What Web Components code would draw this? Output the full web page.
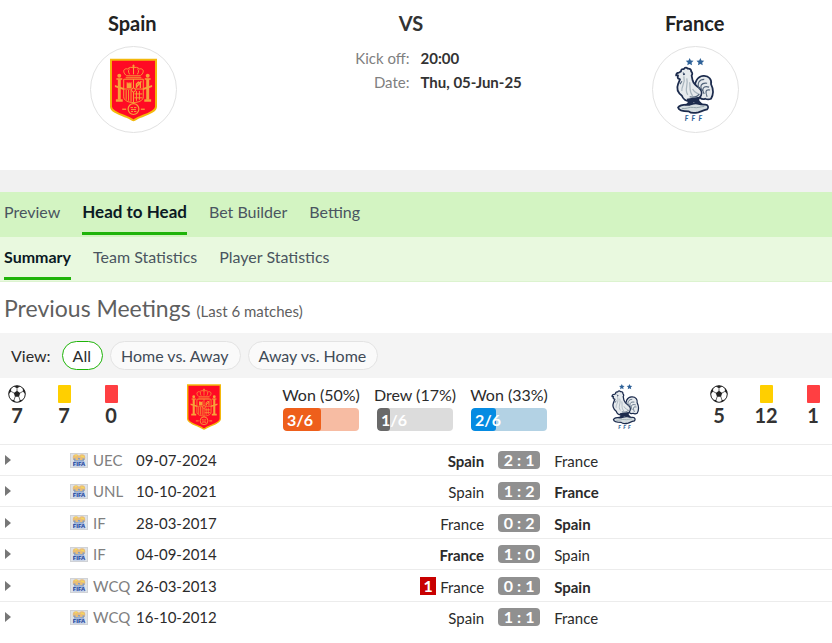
<!DOCTYPE html>
<html lang="en">
<head>
<meta charset="utf-8">
<title>Spain vs France – Head to Head</title>
<style>
body{margin:0;background:#fff;color:#2b2b2b;font-family:Lato,"Liberation Sans",sans-serif;font-size:16px}
</style>
</head>
<body>
<match-page></match-page>

<template id="spain-svg">
<svg viewBox="0 0 48 64" role="img" aria-label="Spain crest">
<path d="M1 1h46v48c0 5-10 8-16 10.500-4 1.500-6 3.500-7 3.500s-3-2-7-3.500C11 57 1 54 1 49z" fill="#ff0a24" stroke="#f3b90c" stroke-width="2"/>
<g fill="none" stroke="#f7a33a" stroke-width="1">
<path d="M17 17.500c-5-4-3-8 1-7 2-2 4-2 6-1 2-1 4-1 6 1 4-1 6 3 1 7z"/>
<path d="M20 16c-2-3-1-5 0-5.500M28 16c2-3 1-5 0-5.500M24 16V6M22.500 7.500h3M16 19.500h16"/>
<path d="M14 21h20v18c0 4-5 5.500-10 6-5-.500-10-2-10-6z"/>
<path d="M24 21v24M14 31h20M16.500 32v10M19 32v11M21.500 32v12M27 33v10M30 33v9M25 36h8M25 40h8"/>
<path d="M27 30v-4l2-2 2 1v5M32 23l-5 6" stroke-width="1.400"/>
<circle cx="24" cy="32" r="2" fill="#ff0a24"/>
</g>
<g fill="#f7a33a">
<path d="M17 24h1v1h1v-1h1v1h1v-1h1v6h-5z"/>
<rect x="8" y="21" width="3" height="21"/><rect x="37" y="21" width="3" height="21"/>
<circle cx="9.500" cy="17.500" r="2"/><circle cx="38.500" cy="17.500" r="2"/>
<rect x="6.500" y="20" width="6" height="1.500"/><rect x="35.500" y="20" width="6" height="1.500"/>
<rect x="6" y="41.500" width="7" height="2.500"/><rect x="35" y="41.500" width="7" height="2.500"/>
<path d="M5 27l9 3v2l-9-3zM43 27l-9 3v2l9-3z"/>
<rect x="12.500" y="51" width="4" height="1.300"/><rect x="31.500" y="51" width="4" height="1.300"/>
</g>
<circle cx="24" cy="51.500" r="5.500" fill="none" stroke="#f7a33a" stroke-width="1.200"/>
<path d="M21 50h2.500M24.500 50H27M21.500 52h5M21.500 54h2M24.500 54h2.500" stroke="#f7a33a"/>
</svg>
</template>

<template id="france-svg">
<svg viewBox="0 0 48 66" role="img" aria-label="France crest">
<path fill="#2f6298" d="M18 0l1.200 2.600 2.800.3-2.100 1.900.6 2.800L18 6.200l-2.500 1.400.6-2.800L14 2.900l2.800-.3zM29 0l1.200 2.600 2.800.3-2.100 1.900.6 2.800L29 6.200l-2.500 1.400.6-2.800L25 2.900l2.800-.3z"/>
<g stroke="#1c2b4d" stroke-width="1.800" stroke-linejoin="round" fill="#e6eaed">
<path d="M24 34c-2-9 2-15 8-15.500 6-.5 9 4 8 8.500 2 4 3 10 0 15-2 1-4 1-6 0-4 2-7-2-10-8z"/>
<path d="M9 14c0-2 1-3 3-2.500 1-2 3-1.800 4-.5 2-.5 4 1 3.500 3 1.500 1 1.500 3 .5 4l1 5c1 4 4 6 7 8 3 3 3 7 0 10-3 3-6 3-9 3-5 1-8-2-9-5-4-3-6-7-4-12l2-5-2-1c-1-1 0-2 0-3H4c0-2 1-3 3-3z"/>
<path d="M6 51c2-3 6-3 9-3 4 1 6-2 11-1 3 1 5 1 8 1 3 0 4 3 2 5-4 1-6 2-9 3-4 1-8 1-10-1-4 0-10 0-11-4z" fill="#d5dde0"/>
</g>
<path d="M15 42l13-2v4l4 4-6-1-4-1-4 3-5 0 3-3z" fill="#1c2b4d"/>
<path d="M12 19c2 8-3 10-2 15M15 21c2 8-3 11 1 17M18 25c1 6-1 9 3 14M21 32c2 4 4 4 6 5" fill="none" stroke="#a8b5be" stroke-width="1.300"/>
<path d="M28 32c-3-6 0-10 5-10M31 34c-3-5-1-9 5-8M33 37c-3-5-1-9 5-7M36 40c-2-5-2-8 3-7M18 40c5 1 8 0 10-3M8 27l2-3M11 15l2 2" fill="none" stroke="#52647a" stroke-width="1.200"/>
<path d="M10 52c4 1 8-2 12-1s7-1 11-1" fill="none" stroke="#93a3aa"/>
<circle cx="12" cy="17" r=".8" fill="#1c2b4d"/>
<g fill="#2f6298" font-family="Lato,sans-serif" font-weight="900" font-style="italic" font-size="7"><text x="13" y="65">F</text><text x="20" y="65">F</text><text x="27" y="65">F</text></g>
</svg>
</template>

<template id="ball-svg">
<svg viewBox="0 0 18 18" role="img" aria-label="Goals"><circle cx="9" cy="9" r="8.300" fill="#fff" stroke="#222"/><path d="M9 5.700l3.200 2.300-1.200 3.800H7L5.800 8zM5.700 1.500L9 3.200l3.300-1.700L9 .700zM.800 9l2.300-2.600.1-3.700L1 6zM17.200 9l-2.300-2.600-.1-3.700L17 6zM3 14.800l3.100.200 1.600 2.200L5 16.400zM15 14.800l-3.100.200-1.600 2.200 2.700-.8z" fill="#222"/><path d="M9 3.200V6M3.100 6.400L6 8M14.900 6.400L12 8M6.100 15L7.200 11.500M11.900 15l-1.100-3.500" stroke="#222" stroke-width=".7"/></svg>
</template>

<template id="fifa-svg">
<svg viewBox="0 0 18 15" role="img" aria-label="FIFA"><rect x=".5" y=".5" width="17" height="14" fill="#dfe3e8" stroke="#d0d2d6"/><circle cx="6" cy="4.500" r="3.200" fill="#e9bd78"/><circle cx="12" cy="4.500" r="3.200" fill="#e9bd78"/><path d="M3.500 6l2 .5M8 5.500l2 .5M12.500 6.500l2-.5M4 8h10" stroke="#7f9cc9" fill="none" stroke-width="1.300"/><path d="M5 3l2-1M11 3l3 1" stroke="#f6df55" stroke-width="1.300"/><rect x="3" y="8.500" width="12" height="5" fill="#b3c5e6"/><text x="9" y="13.300" text-anchor="middle" font-family="Lato,sans-serif" font-size="6" font-weight="900" fill="#1d459b">FIFA</text></svg>
</template>

<script>
const define=(name,css,html)=>customElements.define(name,class extends HTMLElement{
  connectedCallback(){
    if(this.shadowRoot)return;
    const root=this.attachShadow({mode:'open'});
    root.innerHTML='<style>*{box-sizing:border-box}'+css+'</style>'+(typeof html==='function'?html(this):html);
  }
});
const picture=id=>document.getElementById(id+'-svg').innerHTML;

define('app-icon',':host{display:block;line-height:0}svg{display:block;width:100%;height:100%}',el=>picture(el.getAttribute('name')));

define('team-head',`:host{display:flex;flex-direction:column;align-items:center;gap:11px}
h2{margin:0;font-size:20px;line-height:24px;font-weight:700;color:#222}
.ring{width:87px;height:87px;margin-left:2px;border:1px solid #e2e2e2;border-radius:50%;display:grid;place-items:center}
app-icon{width:47px;height:64px}`,
el=>`<h2><slot></slot></h2><div class="ring"><app-icon name="${el.getAttribute('crest')}"></app-icon></div>`);

define('match-header',`:host{display:grid;grid-template-columns:32fr 36fr 32fr;padding:11px 5px 37px 0;min-height:170px}
.mid{display:flex;flex-direction:column;align-items:center}
h1{margin:0 5px 11px 0;font-size:20px;line-height:24px;font-weight:700;color:#333}
dl{margin:0;display:grid;grid-template-columns:1fr 1fr;column-gap:11px;width:100%;padding-left:3px;line-height:24px;font-size:15px}
dt{text-align:right;color:#808080}dd{margin:0;font-weight:700;color:#333;white-space:nowrap}`,
`<team-head crest="spain">Spain</team-head>
<div class="mid"><h1>VS</h1><dl><dt>Kick off:</dt><dd>20:00</dd><dt>Date:</dt><dd>Thu, 05-Jun-25</dd></dl></div>
<team-head crest="france">France</team-head>`);

define('tab-bar',`:host{display:block;background:var(--bar)}
nav{display:flex;gap:22px;padding:0 4px;height:var(--bar-height,45px)}
::slotted(a){color:#4a5560;text-decoration:none;line-height:40px;height:43px;border-bottom:3px solid transparent;box-sizing:border-box;white-space:nowrap}
::slotted(a[aria-current]){color:#0b1a24;font-weight:700;font-size:var(--current,16px);border-bottom-color:#1fb409}`,
'<nav><slot></slot></nav>');

define('filter-bar',`:host{display:block;background:#f4f4f4}
form{display:flex;align-items:center;gap:7px;padding:8px 11px;min-height:45px}
span{margin-right:4px}
button{font:inherit;height:29px;padding:0 11px 1px 10px;border:1px solid #e3e3e3;border-radius:15px;background:#fafafa;color:#414b57;white-space:nowrap}
button[aria-pressed=true]{border-color:#1fb409;color:#2b2b2b;background:#fff}`,
`<form><span>View:</span><button type="button" aria-pressed="true">All</button><button type="button">Home vs. Away</button><button type="button">Away vs. Home</button></form>`);

define('count-stat',`:host{display:flex;flex-direction:column;align-items:center;width:34px}
.pic{height:18px;display:grid;place-items:center}app-icon{width:18px;height:18px}
.card{width:13px;height:18px;border-radius:1px;background:#ffcf00}.red{background:#ff3f42}
b{font-size:20px;line-height:24px;font-weight:700;color:#333}`,
el=>{const k=el.getAttribute('kind');return `<div class="pic">${k==='ball'?'<app-icon name="ball"></app-icon>':`<div class="card ${k}"></div>`}</div><b><slot></slot></b>`});

define('share-bar',`:host{display:flex;flex-direction:column;align-items:center;width:94px;gap:3px;line-height:20px;white-space:nowrap}
.bar{width:76px;height:23px;border-radius:4px;background:var(--rest);overflow:hidden;display:grid}
.fill,b{grid-area:1/1}
.fill{width:var(--share);background:var(--tone);border-radius:4px 3px 3px 4px}
b{padding-left:4px;color:#fff;line-height:23px}`,
el=>`<span>${el.getAttribute('label')}</span><div class="bar"><div class="fill"></div><b><slot></slot></b></div>`);

define('summary-row',`:host{display:flex;padding:7px 2px 0 0;min-height:66px}
.counts{display:flex;gap:13px}
.crest{flex:1;display:flex;justify-content:center;padding-left:6px}
.crest.away{padding:0 6px 0 0}
.crest app-icon{width:34px;height:46px;margin-top:-1px}
.shares{display:flex}
.counts count-stat{flex:none}
.home{--tone:#ee5f1b;--rest:#f7bca3;--share:50%}
.draw{--tone:#696969;--rest:#dcdcdc;--share:17%}
.away{--tone:#058be2;--rest:#b3d2e4;--share:33%}`,
`<div class="counts"><count-stat kind="ball">7</count-stat><count-stat kind="yellow">7</count-stat><count-stat kind="red">0</count-stat></div>
<div class="crest"><app-icon name="spain"></app-icon></div>
<div class="shares"><share-bar class="home" label="Won (50%)">3/6</share-bar><share-bar class="draw" label="Drew (17%)">1/6</share-bar><share-bar class="away" label="Won (33%)">2/6</share-bar></div>
<div class="crest away"><app-icon name="france"></app-icon></div>
<div class="counts"><count-stat kind="ball">5</count-stat><count-stat kind="yellow">12</count-stat><count-stat kind="red">1</count-stat></div>`);

define('score-badge',`:host{display:flex;justify-content:center;gap:4px;width:42px;height:18px;margin:0 auto;border-radius:4px;background:#909090;color:#fff;font-weight:700;line-height:18px}`,
el=>el.getAttribute('value').split(':').map(v=>`<span>${v}</span>`).join('<span>:</span>'));

const games=[['UEC','09-07-2024','Spain','2:1','France','h'],['UNL','10-10-2021','Spain','1:2','France','a'],['IF','28-03-2017','France','0:2','Spain','a'],['IF','04-09-2014','France','1:0','Spain','h'],['WCQ','26-03-2013','France','0:1','Spain','a',1],['WCQ','16-10-2012','Spain','1:1','France','']];
define('meetings-table',`:host{display:block}
table{width:100%;border-collapse:collapse;table-layout:fixed}
td{padding:0;height:31px;border-top:1px solid #ececec;line-height:20px;white-space:nowrap;vertical-align:middle}
tr:nth-child(odd):not(:first-child) td{height:32px}
.t{width:70px}.f{width:23px}.c{width:43px}.s{width:70px}.d{width:94px}.a{width:33.4%}
button{display:block;width:16px;height:16px;padding:0 0 0 5px;border:0;background:none}
button::before{content:"";display:block;width:0;border:5px solid transparent;border-left:6px solid #777;border-right:0}
app-icon{width:18px;height:15px}
.comp,.date,.name{font-size:15px}.comp{color:#808080}.home{text-align:right}.name{padding-top:2px}.win{font-weight:700}
mark{display:inline-block;width:16px;height:18px;margin-right:4px;background:#c80000;color:#fff;font-size:16px;font-weight:700;line-height:18px;text-align:center;vertical-align:1px}`,
()=>`<table><colgroup><col class="t"><col class="f"><col class="c"><col class="d"><col><col class="s"><col class="a"></colgroup><tbody>${games.map(g=>`<tr><td><button type="button" aria-label="Show match"></button></td><td><app-icon name="fifa"></app-icon></td><td class="comp">${g[0]}</td><td class="date">${g[1]}</td><td class="home name ${g[5]==='h'?'win':''}">${g[6]?`<mark>${g[6]}</mark>`:''}${g[2]}</td><td><score-badge value="${g[3]}"></score-badge></td><td class="name ${g[5]==='a'?'win':''}">${g[4]}</td></tr>`).join('')}</tbody></table>`);

define('section-title',`:host{display:block}h2{margin:0;padding:1px 4px 0;font-size:23px;line-height:50px;font-weight:400;color:#5f5f5f;display:flex;align-items:baseline;gap:6px;white-space:nowrap}small{font-size:15px;line-height:20px}`,
'<h2><slot></slot><small><slot name="note"></slot></small></h2>');

define('match-page',`:host{display:block}
.gap{height:22px;background:#f1f1f1}
.main{--bar:#d3f4c2;--current:17px}
.sub{--bar:#e9f9df;--bar-height:44px;border-bottom:1px solid #dcf3cf}`,
`<match-header></match-header><div class="gap"></div>
<tab-bar class="main"><a href="#p">Preview</a><a href="#h" aria-current="page">Head to Head</a><a href="#bb">Bet Builder</a><a href="#b">Betting</a></tab-bar>
<tab-bar class="sub"><a href="#s" aria-current="page">Summary</a><a href="#t">Team Statistics</a><a href="#ps">Player Statistics</a></tab-bar>
<section-title>Previous Meetings<span slot="note">(Last 6 matches)</span></section-title>
<filter-bar></filter-bar><summary-row></summary-row><meetings-table></meetings-table>`);
</script>
</body>
</html>
